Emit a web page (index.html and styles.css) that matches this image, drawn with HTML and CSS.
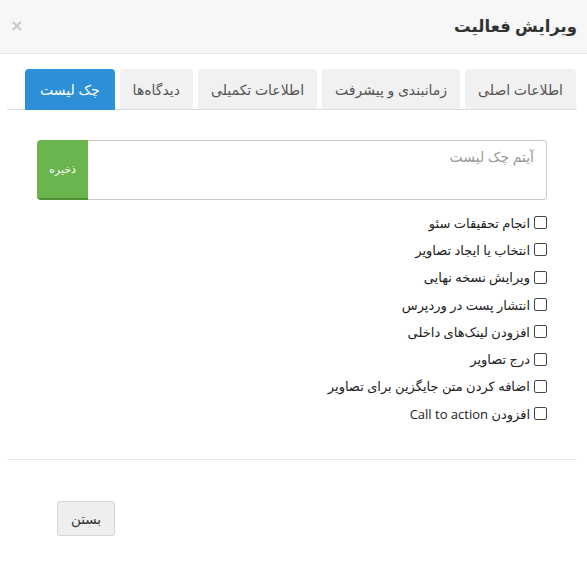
FILE: index.html
```html
<!DOCTYPE html>
<html lang="fa" dir="rtl">
<head>
<meta charset="utf-8">
<title>ویرایش فعالیت</title>
<link rel="stylesheet" href="styles.css">
</head>
<body>
<div class="modal">
  <div class="modal-header">
    <h4 class="modal-title">ویرایش فعالیت</h4>
    <span class="close">×</span>
  </div>
  <div class="modal-body">
    <ul class="tabs">
      <li class="tab">اطلاعات اصلی</li>
      <li class="tab">زمانبندی و پیشرفت</li>
      <li class="tab">اطلاعات تکمیلی</li>
      <li class="tab">دیدگاه‌ها</li>
      <li class="tab active">چک لیست</li>
    </ul>
    <div class="tab-content">
      <div class="input-group">
        <div class="textarea">آیتم چک لیست</div>
        <div class="save-btn">ذخیره</div>
      </div>
      <ul class="checklist">
        <li class="check-item"><span class="box"></span><span>انجام تحقیقات سئو</span></li>
        <li class="check-item"><span class="box"></span><span>انتخاب یا ایجاد تصاویر</span></li>
        <li class="check-item"><span class="box"></span><span>ویرایش نسخه نهایی</span></li>
        <li class="check-item"><span class="box"></span><span>انتشار پست در وردپرس</span></li>
        <li class="check-item"><span class="box"></span><span>افزودن لینک‌های داخلی</span></li>
        <li class="check-item"><span class="box"></span><span>درج تصاویر</span></li>
        <li class="check-item"><span class="box"></span><span>اضافه کردن متن جایگزین برای تصاویر</span></li>
        <li class="check-item"><span class="box"></span><span>افزودن Call to action</span></li>
      </ul>
    </div>
  </div>
  <div class="modal-footer">
    <div class="close-btn">بستن</div>
  </div>
</div>
</body>
</html>
```

FILE: styles.css
```css
* { box-sizing: border-box; }
html, body {
  margin: 0;
  padding: 0;
  background: #ffffff;
}
body {
  font-family: "Open Sans", "DejaVu Sans", sans-serif;
  font-size: 13px;
  color: #333333;
  direction: rtl;
}
.modal-header {
  height: 54px;
  background: #f7f7f7;
  border-bottom: 1px solid #e5e5e5;
  display: flex;
  align-items: center;
  justify-content: space-between;
  padding: 0 10px 2px 10px;
}
.modal-title {
  margin: 0;
  font-size: 16.5px;
  font-weight: bold;
  color: #333;
}
.close {
  color: #c8c8c8;
  font-size: 16px;
  font-weight: bold;
  font-family: "DejaVu Sans", sans-serif;
  line-height: 1;
}
.modal-body {
  padding: 15px 10px 0 10px;
}
.tabs {
  list-style: none;
  margin: 0 0 0 -3px;
  padding: 0 1px 0 0;
  display: flex;
  gap: 5px;
  border-bottom: 1px solid #dddddd;
}
.tab {
  height: 41px;
  padding: 0 13px;
  display: flex;
  align-items: center;
  background: #f1f1f1;
  border-radius: 4px 4px 0 0;
  color: #555;
  font-size: 14px;
  margin-bottom: -1px;
  border-bottom: 1px solid #dddddd;
}
.tab.active {
  background: #2c8fd8;
  color: #ffffff;
  border-bottom-color: #2c8fd8;
  padding: 0 15px;
}
.tab-content {
  padding: 30px 30px 0 27px;
}
.input-group {
  display: flex;
  height: 60px;
}
.textarea {
  flex: 1;
  border: 1px solid #cccccc;
  border-left: 0;
  border-radius: 0 4px 4px 0;
  color: #999999;
  font-size: 14px;
  padding: 6px 12px;
}
.save-btn {
  width: 51px;
  background: #6ab54d;
  border-bottom: 2px solid #4f8f37;
  color: #ffffff;
  font-size: 11px;
  display: flex;
  align-items: center;
  justify-content: center;
  border-radius: 4px 0 0 4px;
  padding-bottom: 2px;
}
.checklist {
  list-style: none;
  margin: 9px 0 0 0;
  padding: 0;
}
.check-item {
  height: 27.3px;
  display: flex;
  align-items: center;
  gap: 4px;
  font-size: 13px;
  color: #222;
}
.box {
  width: 13px;
  height: 13px;
  border: 1px solid #444;
  border-radius: 2px;
  background: #fff;
  flex: none;
}
.modal-footer {
  margin: 32px 10px 0 7px;
  border-top: 1px solid #e5e5e5;
  padding: 41px 0 0 50px;
  display: flex;
  justify-content: flex-end;
}
.close-btn {
  width: 58px;
  height: 35px;
  background: #eeeeee;
  border: 1px solid #d6d6d6;
  border-radius: 3px;
  display: flex;
  align-items: center;
  justify-content: center;
  font-size: 13.5px;
  color: #333;
}
```
